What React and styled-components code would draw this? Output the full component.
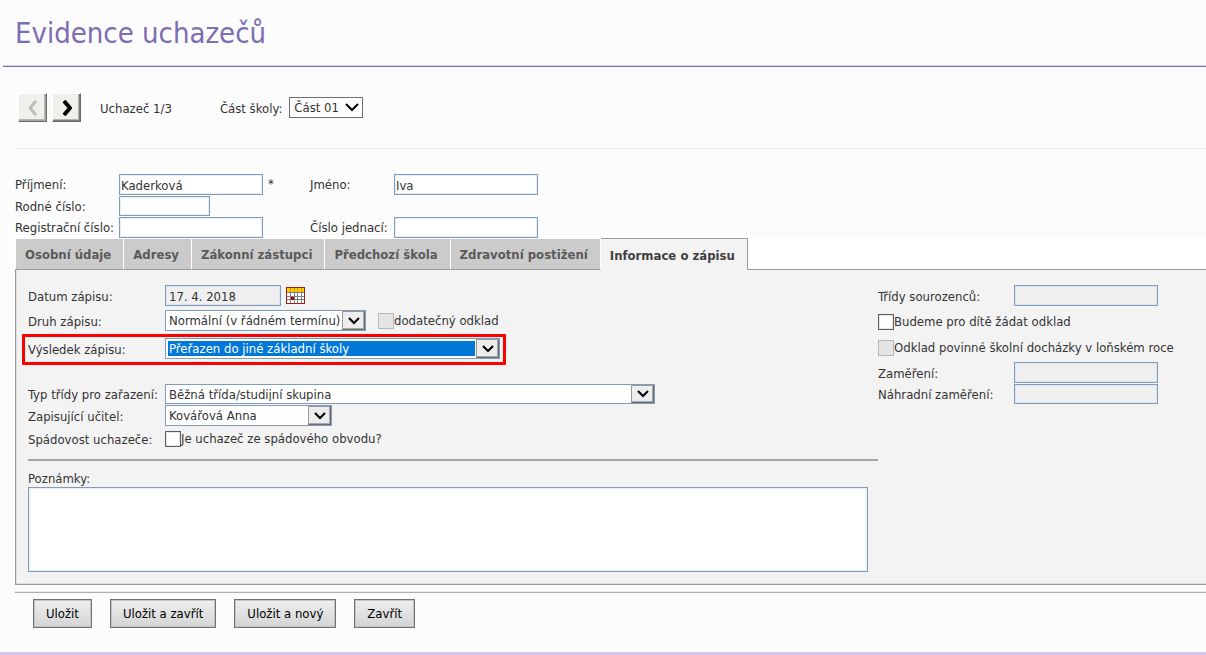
import React from "react";
import styled, { createGlobalStyle } from "styled-components";

const GlobalStyle = createGlobalStyle`
  *, *::before, *::after { box-sizing: border-box; }
  body {
    margin: 0;
    background: #fcfcfc;
    color: #333;
    font: 13px/16px Tahoma, "DejaVu Sans Condensed", "DejaVu Sans", sans-serif;
  }
  input, select, textarea, button { font: inherit; color: inherit; margin: 0; border-radius: 0; }
`;

const Page = styled.div`
  min-height: 100vh;
  display: flex;
  flex-direction: column;
  border-bottom: 3px solid #d2c6f1;
`;

const Header = styled.header`
  margin-left: 3px;
  padding: 16px 12px 15px;
  border-bottom: 1px solid #7b6cb5;
  box-shadow: inset 0 -1px 0 #dcd7ee;
`;

const Title = styled.h1`
  margin: 0;
  color: #7c6db4;
  font-size: 29px;
  line-height: 35px;
  font-weight: 400;
`;

const Toolbar = styled.div`
  display: flex;
  align-items: center;
  margin-left: 15px;
  padding: 26px 3px;
  border-bottom: 1px solid #e9e9e9;
`;

const PagerButton = styled.button`
  display: flex;
  align-items: center;
  justify-content: center;
  width: 29px;
  height: 29px;
  padding: 0;
  margin-right: 5px;
  background: #efefeb;
  border: 1px solid;
  border-color: #fff #696969 #696969 #fff;
  box-shadow: inset -1px -1px 0 ${(p) => (p.disabled ? "#a5a5a5" : "#7d7d7d")}, inset -2px -2px 0 #b4b4b0;
`;

const Position = styled.span`
  margin: 0 48px 0 14px;
  padding-top: 2px;
`;

const FieldLabel = styled.label`
  padding-top: 2px;
  white-space: nowrap;
`;

const PartSelectBox = styled.span`
  display: grid;
  width: 74px;
  margin-left: 7px;
  > * { grid-area: 1 / 1; }
`;

const PartSelect = styled.select`
  appearance: none;
  width: 100%;
  height: 21px;
  padding: 0 4px;
  background: #fff;
  border: 1px solid #6e6e6e;
  outline: none;
`;

const SelectChevron = styled.svg`
  align-self: center;
  justify-self: end;
  margin-right: 4px;
  pointer-events: none;
`;

const Identity = styled.section`
  display: grid;
  grid-template-columns: 104px 191px 84px 144px;
  row-gap: 1px;
  padding: 25px 15px 0;
`;

const IdentityLabel = styled(FieldLabel)`
  padding-top: 3px;
`;

const InputCell = styled.div`
  display: flex;
  align-items: flex-start;
  grid-column: ${(p) => (p.$last ? "4" : "auto")};
`;

const TextInput = styled.input`
  width: ${(p) => p.$width || 144}px;
  height: ${(p) => (p.$low ? 20 : 21)}px;
  padding: ${(p) => (p.$low ? "0 2px" : "2px 2px 0")};
  padding-left: ${(p) => (p.$inset ? 3 : 1)}px;
  background: #fff;
  border: 1px solid #7f9db9;
  box-shadow: inset 0 0 0 1px #e8eef6;
  outline: none;
  &:read-only {
    background: #efefef;
    box-shadow: inset 0 0 0 1px #dfe5f0;
  }
`;

const Required = styled.span`
  margin-left: 5px;
  line-height: 20px;
`;

const Tabs = styled.nav`
  display: flex;
  align-items: flex-end;
  height: 32px;
  margin: 0 0 -1px 15px;
  padding-left: 1px;
  position: relative;
  background: linear-gradient(#fff 31px, transparent 31px);
`;

const Tab = styled.button`
  height: ${(p) => (p.$active ? 32 : 31)}px;
  padding: 2px 12px 0 9px;
  white-space: nowrap;
  font-weight: 700;
  color: ${(p) => (p.$active ? "#404040" : "#5a5a5a")};
  background: ${(p) => (p.$active ? "#f3f3f3" : "#cbcbcb")};
  border: solid;
  border-width: ${(p) => (p.$active ? "1px 1px 0 0" : "0 1px 1px 0")};
  border-color: ${(p) => (p.$active ? "#999" : "#fff #fff #999 #fff")};
`;

const Panel = styled.section`
  display: grid;
  grid-template-columns: 850px 1fr;
  margin-left: 15px;
  padding: 15px 0 12px 12px;
  background: #f3f3f3;
  border: 1px solid #999;
  border-right: 0;
  box-shadow: inset 1px -1px 0 #dedede;
`;

const Column = styled.div`
  display: flex;
  flex-direction: column;
  align-items: flex-start;
  min-width: 0;
`;

const Row = styled.div`
  display: flex;
  align-items: center;
  margin-top: ${(p) => p.$gap || 0}px;
`;

const Highlight = styled(Row)`
  margin: 3px 0 0 -6px;
  padding: 1px 3px 3px;
  border: 3px solid #f00;
  border-radius: 1px;
`;

const RowLabel = styled(FieldLabel)`
  width: ${(p) => p.$width || 137}px;
  line-height: ${(p) => (p.$low ? 18 : 19)}px;
`;

const SelectBox = styled.span`
  display: grid;
  width: ${(p) => p.$width}px;
  height: ${(p) => (p.$low ? 20 : 21)}px;
  background: #fff;
  border: 1px solid #7f9db9;
  > * { grid-area: 1 / 1; min-height: 0; }
`;

const Select = styled.select`
  appearance: none;
  width: 100%;
  height: 100%;
  padding: 0 1px;
  line-height: 15px;
  color: ${(p) => (p.$selected ? "#fff" : "inherit")};
  background: ${(p) => (p.$selected ? "#0078d7" : "#fff")};
  border: solid #fff;
  border-width: 2px 24px 2px 2px;
  outline: none;
`;

const Arrow = styled.span`
  display: flex;
  align-items: center;
  justify-content: center;
  justify-self: end;
  width: 23px;
  height: 100%;
  background: #ededed;
  border: 1px solid;
  border-color: #999 #6d6d6d #6d6d6d #999;
  box-shadow: inset -1px -1px 0 #a8a8a8;
  pointer-events: none;
`;

const Calendar = styled.button`
  display: flex;
  padding: 0;
  margin-left: 5px;
  border: 0;
  background: none;
`;

const CheckLabel = styled.label`
  display: flex;
  align-items: center;
  margin-left: ${(p) => (p.$after ? 12 : 0)}px;
  white-space: nowrap;
  line-height: 14px;
  height: 17px;
`;

const Check = styled.input`
  appearance: none;
  width: 16px;
  height: 16px;
  flex: none;
  background: #fff;
  border: 1px solid #5c5c5c;
  box-shadow: inset 0 0 0 1px #e6e6e6;
  &:disabled {
    background: #e4e4e4;
    border-color: #b8b8b8;
    box-shadow: none;
  }
`;

const Divider = styled.hr`
  width: 100%;
  height: 2px;
  margin: 10px 0 8px;
  border: 0;
  background: #a5a5a5;
`;

const Notes = styled.textarea`
  display: block;
  width: 840px;
  height: 85px;
  padding: 2px;
  background: #fff;
  border: 1px solid #7f9db9;
  box-shadow: inset 0 0 0 1px #e8eef6;
  resize: none;
  outline: none;
`;

const Actions = styled.footer`
  display: flex;
  gap: 18px;
  margin: 7px 0 0 15px;
  padding: 6px 18px 24px;
  border-top: 1px solid #adadad;
  box-shadow: 0 -1px 0 #ebebeb;
`;

const ActionButton = styled.button`
  height: 29px;
  padding: 1px 12px 0;
  color: #000;
  background: linear-gradient(#efefef, #d4d4d4);
  border: 1px solid #707070;
  box-shadow: inset 0 0 0 1px #c4c4c4;
`;

function PagerIcon({ back }) {
  return (
    <svg width="14" height="18" viewBox="0 0 14 18" fill="none" stroke={back ? "#bdbdb8" : "#000"} strokeWidth={back ? 3 : 4} strokeLinejoin="round" aria-hidden="true">
      <path d={back ? "M10 2L4 9l6 7" : "M4 2l6 7-6 7"} />
    </svg>
  );
}

function DropDown({ id, value, width, low, selected }) {
  return (
    <SelectBox $width={width} $low={low}>
      <Select id={id} defaultValue={value} $selected={selected}>
        <option>{value}</option>
      </Select>
      <Arrow>
        <svg width="12" height="8" viewBox="0 0 12 8" fill="none" stroke="#000" strokeWidth="2" aria-hidden="true">
          <path d="M1 1l5 5 5-5" />
        </svg>
      </Arrow>
    </SelectBox>
  );
}

function CheckField({ children, after, disabled }) {
  return (
    <CheckLabel $after={after}>
      <Check type="checkbox" disabled={disabled} />
      {children}
    </CheckLabel>
  );
}

function CalendarIcon() {
  return (
    <svg width="19" height="17" viewBox="0 0 19 17" shapeRendering="crispEdges" aria-hidden="true">
      <path fill="#fff" d="M0 0h19v17H0z" />
      <path fill="#808080" d="M1 5h17v1H1zM1 9h17v1H1zM1 12h17v1H1zM4 5h1v11H4zM8 5h1v11H8zM11 5h1v11h-1zM15 5h1v11h-1z" />
      <path fill="#ffcc00" d="M1 1h17v4H1z" />
      <path fill="#d09a20" d="M4 1h1v4H4zM8 1h1v4H8zM11 1h1v4h-1zM15 1h1v4h-1z" />
      <path fill="#900" d="M5 10h3v3H5z" />
      <path fill="#a51c1c" fillRule="evenodd" d="M0 0h19v17H0zM1 1v15h17V1z" />
    </svg>
  );
}

const TABS = ["Osobní údaje", "Adresy", "Zákonní zástupci", "Předchozí škola", "Zdravotní postižení", "Informace o zápisu"];
const ACTIONS = ["Uložit", "Uložit a zavřít", "Uložit a nový", "Zavřít"];

export default function App() {
  return (
    <Page>
      <GlobalStyle />
      <Header>
        <Title>Evidence uchazečů</Title>
      </Header>

      <Toolbar>
        <PagerButton type="button" aria-label="Předchozí" disabled><PagerIcon back /></PagerButton>
        <PagerButton type="button" aria-label="Další"><PagerIcon /></PagerButton>
        <Position>Uchazeč 1/3</Position>
        <FieldLabel htmlFor="cast">Část školy:</FieldLabel>
        <PartSelectBox>
          <PartSelect id="cast" defaultValue="Část 01"><option>Část 01</option></PartSelect>
          <SelectChevron width="14" height="9" viewBox="0 0 14 9" fill="none" stroke="#000" strokeWidth="2" aria-hidden="true">
            <path d="M1 1l6 6 6-6" />
          </SelectChevron>
        </PartSelectBox>
      </Toolbar>

      <Identity>
        <IdentityLabel htmlFor="prijmeni">Příjmení:</IdentityLabel>
        <InputCell><TextInput id="prijmeni" defaultValue="Kaderková" /><Required>*</Required></InputCell>
        <IdentityLabel htmlFor="jmeno">Jméno:</IdentityLabel>
        <InputCell><TextInput id="jmeno" defaultValue="Iva" /></InputCell>
        <IdentityLabel htmlFor="rodne">Rodné číslo:</IdentityLabel>
        <InputCell><TextInput id="rodne" $width={91} $low /></InputCell>
        <InputCell $last />
        <IdentityLabel htmlFor="registracni">Registrační číslo:</IdentityLabel>
        <InputCell><TextInput id="registracni" /></InputCell>
        <IdentityLabel htmlFor="jednaci">Číslo jednací:</IdentityLabel>
        <InputCell><TextInput id="jednaci" /></InputCell>
      </Identity>

      <Tabs>
        {TABS.map((name, i) => (
          <Tab key={name} type="button" $active={i === TABS.length - 1}>{name}</Tab>
        ))}
      </Tabs>

      <Panel>
        <Column>
          <Row>
            <RowLabel htmlFor="datum">Datum zápisu:</RowLabel>
            <TextInput id="datum" defaultValue="17. 4. 2018" readOnly $width={116} $inset />
            <Calendar type="button" aria-label="Kalendář"><CalendarIcon /></Calendar>
          </Row>
          <Row $gap={4}>
            <RowLabel htmlFor="druh">Druh zápisu:</RowLabel>
            <DropDown id="druh" value="Normální (v řádném termínu)" width={201} />
            <CheckField after disabled>dodatečný odklad</CheckField>
          </Row>
          <Highlight>
            <RowLabel htmlFor="vysledek">Výsledek zápisu:</RowLabel>
            <DropDown id="vysledek" value="Přeřazen do jiné základní školy" width={335} selected />
          </Highlight>
          <Row $gap={19}>
            <RowLabel htmlFor="typ" $low>Typ třídy pro zařazení:</RowLabel>
            <DropDown id="typ" value="Běžná třída/studijní skupina" width={490} low />
          </Row>
          <Row $gap={1}>
            <RowLabel htmlFor="ucitel">Zapisující učitel:</RowLabel>
            <DropDown id="ucitel" value="Kovářová Anna" width={167} />
          </Row>
          <Row $gap={2}>
            <RowLabel as="span">Spádovost uchazeče:</RowLabel>
            <CheckField>Je uchazeč ze spádového obvodu?</CheckField>
          </Row>
          <Divider />
          <FieldLabel htmlFor="poznamky">Poznámky:</FieldLabel>
          <Notes id="poznamky" />
        </Column>

        <Column>
          <Row>
            <RowLabel htmlFor="tridy" $width={136}>Třídy sourozenců:</RowLabel>
            <TextInput id="tridy" readOnly />
          </Row>
          <Row $gap={7}><CheckField>Budeme pro dítě žádat odklad</CheckField></Row>
          <Row $gap={9}><CheckField disabled>Odklad povinné školní docházky v loňském roce</CheckField></Row>
          <Row $gap={6}>
            <RowLabel htmlFor="zamereni" $width={136}>Zaměření:</RowLabel>
            <TextInput id="zamereni" readOnly />
          </Row>
          <Row $gap={1}>
            <RowLabel htmlFor="nahradni" $width={136} $low>Náhradní zaměření:</RowLabel>
            <TextInput id="nahradni" readOnly $low />
          </Row>
        </Column>
      </Panel>

      <Actions>
        {ACTIONS.map((name) => <ActionButton key={name} type="button">{name}</ActionButton>)}
      </Actions>
    </Page>
  );
}
